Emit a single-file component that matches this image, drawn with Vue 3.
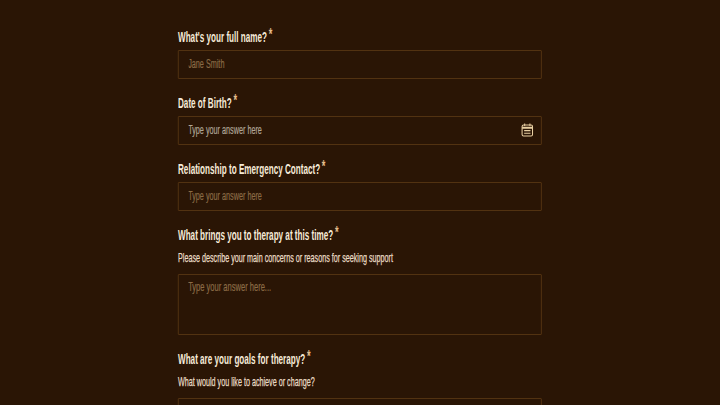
<script setup>
const fields = [
  { id: 'name', label: "What's your full name?", placeholder: 'Jane Smith' },
  { id: 'dob', label: 'Date of Birth?', placeholder: 'Type your answer here', light: true, calendar: true },
  { id: 'relation', label: 'Relationship to Emergency Contact?', placeholder: 'Type your answer here' },
  { id: 'reason', label: 'What brings you to therapy at this time?', hint: 'Please describe your main concerns or reasons for seeking support', placeholder: 'Type your answer here...', area: true },
  { id: 'goals', label: 'What are your goals for therapy?', hint: 'What would you like to achieve or change?', placeholder: 'Type your answer here...', area: true },
]
</script>

<template>
  <div class="page">
    <div class="column">
      <!-- no condensed font installed, so the whole form is squeezed horizontally -->
      <form class="form">
        <div v-for="f in fields" :key="f.id" class="field">
          <label class="label" :for="f.id">{{ f.label }}<span class="star">*</span></label>
          <p v-if="f.hint" class="hint">{{ f.hint }}</p>
          <textarea v-if="f.area" :id="f.id" class="input area" :placeholder="f.placeholder"></textarea>
          <div v-else class="wrap">
            <input :id="f.id" class="input" :class="{ light: f.light }" type="text" :placeholder="f.placeholder" />
            <svg v-if="f.calendar" class="cal" viewBox="0 0 14 14" preserveAspectRatio="none" fill="none" stroke="#e9cfa2" stroke-width="1.1">
              <rect x="1.4" y="2" width="11.2" height="11" rx="1.6" />
              <path d="M1.4 4.2h11.2M1.4 5.2h11.2M4.2 .6v2.4M9.8 .6v2.4M3.6 7.6h6.8M3.6 10.2h6.8" />
            </svg>
          </div>
        </div>
      </form>
    </div>
  </div>
</template>

<style>
html, body { margin: 0; background: #2a1505; overflow: hidden; }
</style>

<style scoped>
.page {
  height: 405px;
  overflow: hidden;
  background: #2a1505;
  font-family: "Liberation Sans", sans-serif;
}
.column {
  width: 364px;
  margin: 0 auto;
}
.form {
  width: 626.5px;
  padding-top: 30px;
  display: flex;
  flex-direction: column;
  gap: 17px;
  transform: scaleX(0.58);
  transform-origin: left top;
}
.label {
  display: block;
  height: 14px;
  margin-bottom: 6px;
  line-height: 14px;
  font-size: 14px;
  font-weight: 700;
  color: #f6ead8;
}
.star {
  margin-left: 3px;
  font-size: 16px;
  line-height: 0;
  font-weight: 700;
  color: #e3bd8b;
  vertical-align: 2px;
}
.hint {
  margin: 0 0 6px;
  height: 20px;
  line-height: 20px;
  font-size: 12.4px;
  color: #e9dcc6;
  -webkit-text-stroke: 0.25px #e9dcc6;
}
.wrap { position: relative; height: 29px; }
.input {
  display: block;
  box-sizing: border-box;
  width: 100%;
  height: 29px;
  padding: 0 16.5px 2px;
  background: #2a1505;
  border: solid #5c3a16;
  border-width: 1px 1.72px;
  border-radius: 1px;
  outline: none;
  font-family: inherit;
  font-size: 12.5px;
  color: #f6ead8;
  -webkit-text-stroke: 0.2px;
}
.input::placeholder { color: #8a6b45; opacity: 1; }
.input.light::placeholder { color: #b0a596; }
.area {
  height: 61px;
  padding: 4px 16.5px;
  font-size: 13px;
  resize: none;
}
.cal {
  position: absolute;
  right: 13px;
  top: 6.5px;
  width: 22.5px;
  height: 14px;
}
</style>
